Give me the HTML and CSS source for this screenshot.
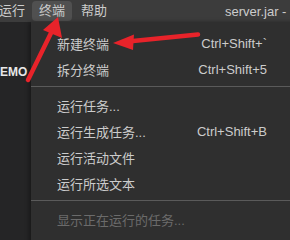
FILE: index.html
```html
<!DOCTYPE html>
<html lang="zh">
<head>
<meta charset="utf-8">
<link rel="stylesheet" href="styles.css">
</head>
<body>
<div class="app">
  <div class="menubar">
    <div class="mitem first">运行</div>
    <div class="mitem active">终端</div>
    <div class="mitem">帮助</div>
    <div class="title">server.jar - sp</div>
  </div>
  <div class="main">
    <div class="side"><span class="demo">EMO</span></div>
  </div>
  <div class="menu">
    <div class="row"><span class="label">新建终端</span><span class="key">Ctrl+Shift+`</span></div>
    <div class="row"><span class="label">拆分终端</span><span class="key">Ctrl+Shift+5</span></div>
    <div class="sep"></div>
    <div class="row"><span class="label">运行任务...</span></div>
    <div class="row"><span class="label">运行生成任务...</span><span class="key">Ctrl+Shift+B</span></div>
    <div class="row"><span class="label">运行活动文件</span></div>
    <div class="row"><span class="label">运行所选文本</span></div>
    <div class="sep"></div>
    <div class="row disabled"><span class="label">显示正在运行的任务...</span></div>
  </div>
  <svg class="arrows" width="290" height="240" viewBox="0 0 290 240">
    <line x1="28" y1="80" x2="52" y2="31" stroke="#e8232a" stroke-width="4.5" stroke-linecap="round"/>
    <polygon points="58,17 62,38 43,30" fill="#e8232a"/>
    <line x1="198" y1="34.5" x2="128" y2="41.5" stroke="#e8232a" stroke-width="4.5" stroke-linecap="round"/>
    <polygon points="113,43 134,34.5 133,50" fill="#e8232a"/>
  </svg>
</div>
</body>
</html>
```
FILE: styles.css
```css
html, body {
  margin: 0;
  padding: 0;
}
body {
  width: 290px;
  height: 240px;
  overflow: hidden;
  background: #252526;
  font-family: "Liberation Sans", "Noto Sans CJK SC", sans-serif;
  font-size: 13px;
  color: #cccccc;
}
.app {
  position: relative;
  width: 290px;
  height: 240px;
  overflow: hidden;
}
.menubar {
  height: 22px;
  background: #3c3c3c;
  display: flex;
  align-items: center;
  white-space: nowrap;
}
.mitem {
  height: 20px;
  line-height: 20px;
  padding: 0 7px;
  border-radius: 4px;
  color: #cccccc;
  flex-shrink: 0;
}
.mitem.first {
  margin-left: -8px;
}
.mitem.active {
  background: #505050;
  margin-right: 2px;
}
.title {
  margin-left: 111px;
  flex-shrink: 0;
  color: #cccccc;
}
.main {
  height: 218px;
  display: flex;
}
.side {
  width: 31px;
  background: #252526;
  padding-top: 43px;
}
.demo {
  display: block;
  font-size: 12px;
  font-weight: bold;
  color: #e8e8e8;
  line-height: 14px;
}
.menu {
  position: absolute;
  left: 31px;
  top: 22px;
  width: 300px;
  height: 230px;
  background: #2f2f2f;
  box-shadow: -2px 0 4px rgba(0,0,0,0.35);
  padding-top: 8px;
  box-sizing: border-box;
}
.row {
  height: 26px;
  display: flex;
  align-items: center;
  padding-left: 26px;
  width: 236px;
  box-sizing: border-box;
  white-space: nowrap;
}
.label {
  flex: 1;
}
.key {
  color: #cccccc;
}
.row.disabled {
  color: #6b6b6b;
}
.sep {
  height: 1px;
  background: #5a5a5a;
  margin: 4px 0 5px 0;
}
.arrows {
  position: absolute;
  left: 0;
  top: 0;
}
```
